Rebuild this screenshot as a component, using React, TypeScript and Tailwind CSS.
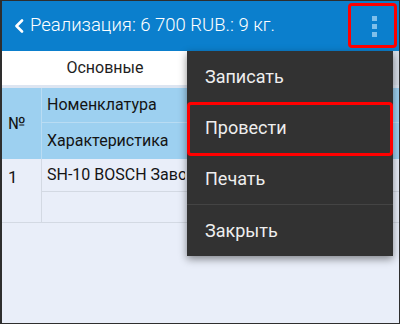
const menuItems = ['Записать', 'Провести', 'Печать', 'Закрыть'];

export default function App() {
  return (
    <div className="relative w-[400px] h-[324px] overflow-hidden bg-[#e9eef9] border-[#2e2e2e] border-t border-r border-b border-l-2 font-['Roboto',sans-serif]">
      {/* Header */}
      <div className="h-[50px] bg-[#0b7fcd] flex items-center pl-[12px] text-white">
        <svg width="10" height="14" viewBox="0 0 10 14" className="mr-[6px]">
          <polyline points="8,1.5 2.5,7 8,12.5" fill="none" stroke="white" strokeWidth="2.6" strokeLinecap="round" strokeLinejoin="round" />
        </svg>
        <span className="text-[18.5px] font-light">Реализация: 6 700 RUB.: 9 кг.</span>
        <div className="ml-auto mr-[22px] flex flex-col gap-[3px]">
          <span className="block w-[5px] h-[5px] bg-[#7fbfea]" />
          <span className="block w-[5px] h-[5px] bg-[#7fbfea]" />
          <span className="block w-[5px] h-[5px] bg-[#7fbfea]" />
        </div>
      </div>

      {/* Tabs */}
      <div className="h-[37px] bg-white border-b-[3px] border-[#dde5f1] flex">
        <div className="w-[206px] flex items-center justify-center text-[16px] text-[#1e1e1e]">Основные</div>
        <div className="flex-1 bg-[#d7dde7]" />
      </div>

      {/* Table */}
      <div className="text-[16px] text-[#141414]">
        <div className="flex bg-[#9dd0f0] h-[71px]">
          <div className="w-[40px] border-r border-[#b9dcf3] flex items-center pl-[6px] text-[17px]">№</div>
          <div className="flex-1 flex flex-col">
            <div className="h-[35px] border-b border-[#b9dcf3] flex items-center pl-[5px]">Номенклатура</div>
            <div className="flex-1 flex items-center pl-[5px]">Характеристика</div>
          </div>
        </div>
        <div className="flex h-[64px] border-b border-[#d3d9e3]">
          <div className="w-[40px] border-r border-[#d3d9e3] pl-[6px] pt-[6px] text-[17px]">1</div>
          <div className="flex-1 flex flex-col">
            <div className="h-[33px] border-b border-[#d3d9e3] pl-[5px] pt-[6px]">
              <div className="w-[138px] whitespace-nowrap overflow-hidden leading-[20px]">SH-10 BOSCH Заводской номер</div>
            </div>
            <div className="flex-1" />
          </div>
        </div>
      </div>

      {/* Dropdown menu */}
      <div className="absolute left-[185px] top-[50px] w-[206px] h-[205px] bg-[#323232] shadow-[0_3px_8px_rgba(0,0,0,0.45)] flex flex-col text-[18px] text-[#eeeeee]">
        {menuItems.map((item, i) => (
          <div
            key={item}
            className={`flex-1 flex items-center pl-[18px] ${i === 2 ? 'border-b border-[#444444]' : ''}`}
          >
            {item}
          </div>
        ))}
      </div>

      {/* Annotation boxes */}
      <div className="absolute left-[346px] top-[2px] w-[49px] h-[45px] border-[3px] border-[#ff0000] rounded-[4px]" />
      <div className="absolute left-[185px] top-[101px] w-[206px] h-[54px] border-[3px] border-[#ff0000] rounded-[4px]" />
    </div>
  );
}
